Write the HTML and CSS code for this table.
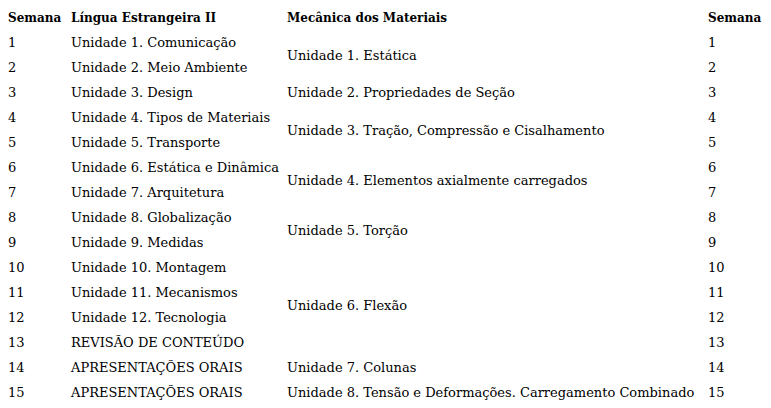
FILE: index.html
```html
<!DOCTYPE html>
<html lang="pt">
<head>
<meta charset="utf-8">
<link rel="stylesheet" href="styles.css">
</head>
<body>
<table class="plan">
  <colgroup>
    <col class="c-week"><col class="c-lang"><col class="c-mec"><col class="c-week2">
  </colgroup>
  <thead>
    <tr><th>Semana</th><th>Língua Estrangeira II</th><th>Mecânica dos Materiais</th><th>Semana</th></tr>
  </thead>
  <tbody>
    <tr><td>1</td><td>Unidade 1. Comunicação</td><td rowspan="2">Unidade 1. Estática</td><td>1</td></tr>
    <tr><td>2</td><td>Unidade 2. Meio Ambiente</td><td>2</td></tr>
    <tr><td>3</td><td>Unidade 3. Design</td><td>Unidade 2. Propriedades de Seção</td><td>3</td></tr>
    <tr><td>4</td><td>Unidade 4. Tipos de Materiais</td><td rowspan="2">Unidade 3. Tração, Compressão e Cisalhamento</td><td>4</td></tr>
    <tr><td>5</td><td>Unidade 5. Transporte</td><td>5</td></tr>
    <tr><td>6</td><td>Unidade 6. Estática e Dinâmica</td><td rowspan="2">Unidade 4. Elementos axialmente carregados</td><td>6</td></tr>
    <tr><td>7</td><td>Unidade 7. Arquitetura</td><td>7</td></tr>
    <tr><td>8</td><td>Unidade 8. Globalização</td><td rowspan="2">Unidade 5. Torção</td><td>8</td></tr>
    <tr><td>9</td><td>Unidade 9. Medidas</td><td>9</td></tr>
    <tr><td>10</td><td>Unidade 10. Montagem</td><td rowspan="4">Unidade 6. Flexão</td><td>10</td></tr>
    <tr><td>11</td><td>Unidade 11. Mecanismos</td><td>11</td></tr>
    <tr><td>12</td><td>Unidade 12. Tecnologia</td><td>12</td></tr>
    <tr><td>13</td><td>REVISÃO DE CONTEÚDO</td><td>13</td></tr>
    <tr><td>14</td><td>APRESENTAÇÕES ORAIS</td><td>Unidade 7. Colunas</td><td>14</td></tr>
    <tr><td>15</td><td>APRESENTAÇÕES ORAIS</td><td>Unidade 8. Tensão e Deformações. Carregamento Combinado</td><td>15</td></tr>
  </tbody>
</table>
</body>
</html>
```

FILE: styles.css
```css
html, body {
  margin: 0;
  background: #ffffff;
}
body {
  padding: 5px 8px 0 8px;
  font-family: "DejaVu Serif", "Liberation Serif", serif;
  font-size: 13px;
  color: #000000;
}
.plan {
  border-collapse: collapse;
  table-layout: fixed;
  width: 763px;
}
.c-week { width: 63px; }
.c-lang { width: 216px; }
.c-mec { width: 421px; }
.c-week2 { width: 63px; }
.plan th,
.plan td {
  padding: 0;
  height: 25px;
  text-align: left;
  vertical-align: middle;
  white-space: nowrap;
}
.plan th {
  font-weight: bold;
  font-size: 12px;
}
.plan td {
  font-weight: normal;
}
```
